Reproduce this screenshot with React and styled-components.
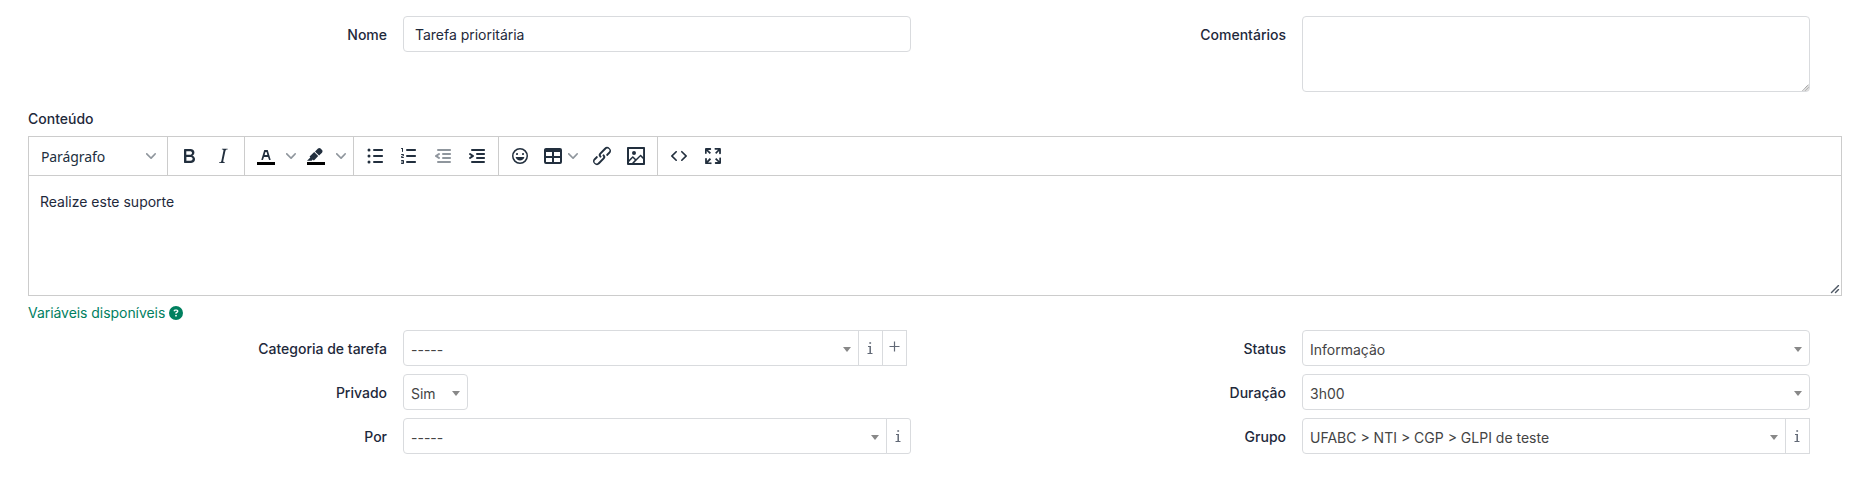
import React from "react";
import styled, { createGlobalStyle, css } from "styled-components";
import { FaCircleQuestion } from "react-icons/fa6";

const GlobalStyle = createGlobalStyle`
  *, *::before, *::after { box-sizing: border-box; }
  body {
    margin: 0;
    background: #fff;
    color: #1e293b;
    font: 400 14px/20px Inter, "Liberation Sans", sans-serif;
  }
`;

const Page = styled.main`
  width: 1870px;
  height: 478px;
  padding: 16px 28px 0;
  overflow: hidden;
  background: #fff;
`;

const FormGrid = styled.section`
  display: grid;
  grid-template-columns: 899px 899px;
  row-gap: 8px;
  margin-left: -16px;
`;

const Field = styled.div`
  display: grid;
  grid-template-columns: 375px 508px;
  column-gap: 16px;
  align-items: start;
`;

const Label = styled.label`
  padding-top: 9px;
  text-align: right;
  font-weight: 500;
`;

const controlBorder = css`
  border: 1px solid #d9dbde;
  border-radius: 4px;
  background: #fff;
`;

const TextInput = styled.input`
  ${controlBorder}
  width: 100%;
  height: 36px;
  padding: 0 11px;
  color: #1e293b;
  font: inherit;
  letter-spacing: -0.02px;
  outline: none;
`;

const TextAreaFrame = styled.div`
  position: relative;
  height: 76px;
`;

const TextArea = styled.textarea`
  ${controlBorder}
  display: block;
  width: 100%;
  height: 76px;
  resize: none;
  outline: none;
`;

const TextAreaGrip = styled.svg`
  position: absolute;
  right: 1px;
  bottom: 1px;
`;

const InputGroup = styled.div`
  display: flex;
  width: ${(p) => p.$width || "508px"};
  height: 36px;
`;

const SelectBox = styled.div`
  ${controlBorder}
  display: flex;
  flex: 1;
  align-items: center;
  justify-content: space-between;
  padding: 2px 7px 0 7px;
  color: #444;
  ${(p) => p.$joined && "border-top-right-radius: 0; border-bottom-right-radius: 0;"}
`;

const SelectValue = styled.span`
  padding-top: 1px;
`;

const Caret = styled.span`
  border: solid transparent;
  border-width: 5px 4px 0;
  border-top-color: #888;
`;

const Addon = styled.span`
  display: flex;
  width: 25px;
  margin-left: -1px;
  align-items: center;
  justify-content: center;
  padding-right: 1px;
  padding-bottom: ${(p) => p.$lift || "0"};
  border: 1px solid #d9dbde;
  border-radius: ${(p) => (p.$rounded ? "0 3px 3px 0" : "0")};
  color: #626976;
`;

const EditorTitle = styled.div`
  height: 44px;
  padding-top: 17px;
  font-weight: 500;
`;

const Editor = styled.section`
  display: flex;
  flex-direction: column;
  width: 1814px;
  height: 160px;
  border: 1px solid #ccc;
`;

const Toolbar = styled.div`
  display: flex;
  height: 39px;
  border-bottom: 1px solid #ccc;
`;

const ToolGroup = styled.div`
  display: flex;
  padding: 0 4px;
  border-right: ${(p) => (p.$last ? "0" : "1px solid #ccc")};
`;

const ToolButton = styled.span`
  display: flex;
  width: ${(p) => p.$width || 34}px;
  align-items: center;
  justify-content: center;
  gap: 3px;
  padding-right: ${(p) => p.$trail || 0}px;
  color: #222f3e;
  opacity: ${(p) => (p.$disabled ? 0.5 : 1)};
`;

const FormatSelect = styled(ToolButton)`
  justify-content: space-between;
  padding: 2px 7px 0 8px;
  font-family: "Noto Sans", sans-serif;
  letter-spacing: -0.1px;
`;

const ChevronSvg = styled.svg`
  flex: none;
  margin-bottom: ${(p) => p.$lift || 0}px;
  fill: #222f3e;
  opacity: 0.5;
`;

const EditorBody = styled.div`
  display: flex;
  flex: 1;
  justify-content: space-between;
  padding: 16px 1px 1px 11px;
`;

const ResizeSvg = styled.svg`
  align-self: flex-end;
  fill: #222f3e;
  opacity: 0.8;
`;

const Variables = styled.a`
  display: flex;
  align-items: center;
  gap: 4px;
  height: 34px;
  color: #00805f;
  letter-spacing: -0.05px;
`;

const ICONS = {
  bold: "M7.8 19c-.3 0-.5 0-.6-.2l-.2-.5V5.7c0-.2 0-.4.2-.5l.6-.2h5c1.5 0 2.7.3 3.5 1 .7.6 1.1 1.4 1.1 2.5a3 3 0 0 1-.6 1.9c-.4.6-1 1-1.6 1.2.4.1.9.3 1.3.6s.8.7 1 1.2c.4.4.5 1 .5 1.6 0 1.3-.4 2.3-1.3 3-.8.7-2.1 1-3.8 1H7.8Zm5-8.3c.6 0 1.2-.1 1.6-.5.4-.3.6-.7.6-1.3 0-1.1-.8-1.7-2.3-1.7H9.3v3.5h3.4Zm.5 6c.7 0 1.3-.1 1.7-.4.4-.4.6-.9.6-1.5s-.2-1-.7-1.4c-.4-.3-1-.4-2-.4H9.4v3.8h4Z",
  italic: "m16.7 4.7-.1.9h-.3c-.6 0-1 0-1.4.3-.3.3-.4.6-.5 1.1l-2.1 9.8v.6c0 .5.4.8 1.4.8h.2l-.2.8H8l.2-.8h.2c1.1 0 1.8-.5 2-1.5l2-9.8.1-.5c0-.6-.4-.8-1.4-.8h-.3l.2-.9h5.8Z",
  textColor: "M8.7 16h-.8a.5.5 0 0 1-.5-.6l2.7-9c.1-.3.3-.4.5-.4h2.8c.2 0 .4.1.5.4l2.7 9a.5.5 0 0 1-.5.6h-.8a.5.5 0 0 1-.4-.4l-.7-2.2c0-.3-.3-.4-.5-.4h-3.4c-.2 0-.4.1-.5.4l-.7 2.2c0 .3-.2.4-.4.4Zm2.6-7.6-.6 2a.5.5 0 0 0 .5.6h1.6a.5.5 0 0 0 .5-.6l-.6-2c0-.3-.3-.4-.5-.4h-.4c-.2 0-.4.1-.5.4Z",
  highlight: "M7.7 16.7H3l3.3-3.3-.7-.8L10.2 8l4 4.1-4 4.2c-.2.2-.6.2-.8 0l-.6-.7-1.1 1.1zm5-7.5L11 7.4l3-2.9a2 2 0 0 1 2.6 0L18 6c.7.7.7 2 0 2.7l-2.9 2.9-1.8-1.8-.5-.6",
  bullets: "M11 5h8c.6 0 1 .4 1 1s-.4 1-1 1h-8a1 1 0 0 1 0-2Zm0 6h8c.6 0 1 .4 1 1s-.4 1-1 1h-8a1 1 0 0 1 0-2Zm0 6h8c.6 0 1 .4 1 1s-.4 1-1 1h-8a1 1 0 0 1 0-2ZM6 4.5a1.5 1.5 0 1 1 0 3 1.5 1.5 0 0 1 0-3Zm0 6a1.5 1.5 0 1 1 0 3 1.5 1.5 0 0 1 0-3Zm0 6a1.5 1.5 0 1 1 0 3 1.5 1.5 0 0 1 0-3Z",
  numbers: "M10 17h8c.6 0 1 .4 1 1s-.4 1-1 1h-8a1 1 0 0 1 0-2Zm0-6h8c.6 0 1 .4 1 1s-.4 1-1 1h-8a1 1 0 0 1 0-2Zm0-6h8c.6 0 1 .4 1 1s-.4 1-1 1h-8a1 1 0 1 1 0-2ZM6 4v3.5c0 .3-.2.5-.5.5a.5.5 0 0 1-.5-.5V5h-.5a.5.5 0 0 1 0-1H6Zm-1 8.8.2.2h1.3c.3 0 .5.2.5.5s-.2.5-.5.5H4.9a1 1 0 0 1-.9-1V13c0-.4.3-.8.6-1l1.2-.4.2-.3a.2.2 0 0 0-.2-.2H4.5a.5.5 0 0 1-.5-.5c0-.3.2-.5.5-.5h1.6c.5 0 .9.4.9 1v.1c0 .4-.3.8-.6 1l-1.2.4-.2.3ZM7 17v2c0 .6-.4 1-1 1H4.5a.5.5 0 0 1 0-1h1.2c.2 0 .3-.1.3-.3 0-.2-.1-.3-.3-.3H4.4a.4.4 0 1 1 0-.8h1.3c.2 0 .3-.1.3-.3 0-.2-.1-.3-.3-.3H4.5a.5.5 0 1 1 0-1H6c.6 0 1 .4 1 1Z",
  outdent: "M7 5h12c.6 0 1 .4 1 1s-.4 1-1 1H7a1 1 0 1 1 0-2Zm5 4h7c.6 0 1 .4 1 1s-.4 1-1 1h-7a1 1 0 0 1 0-2Zm0 4h7c.6 0 1 .4 1 1s-.4 1-1 1h-7a1 1 0 0 1 0-2Zm-5 4h12a1 1 0 0 1 0 2H7a1 1 0 0 1 0-2Zm1.6-3.8a1 1 0 0 1-1.2 1.6l-3-2a1 1 0 0 1 0-1.6l3-2a1 1 0 0 1 1.2 1.6L6.8 12l1.8 1.2Z",
  indent: "M7 5h12c.6 0 1 .4 1 1s-.4 1-1 1H7a1 1 0 1 1 0-2Zm5 4h7c.6 0 1 .4 1 1s-.4 1-1 1h-7a1 1 0 0 1 0-2Zm0 4h7c.6 0 1 .4 1 1s-.4 1-1 1h-7a1 1 0 0 1 0-2Zm-5 4h12a1 1 0 0 1 0 2H7a1 1 0 0 1 0-2Zm-2.6-3.8L6.2 12l-1.8-1.2a1 1 0 0 1 1.2-1.6l3 2a1 1 0 0 1 0 1.6l-3 2a1 1 0 1 1-1.2-1.6Z",
  emoji: "M9 11c.6 0 1-.4 1-1s-.4-1-1-1a1 1 0 0 0-1 1c0 .6.4 1 1 1Zm6 0c.6 0 1-.4 1-1s-.4-1-1-1a1 1 0 0 0-1 1c0 .6.4 1 1 1Zm-3 5.5c2.1 0 4-1.5 4.4-3.5H7.6c.5 2 2.3 3.5 4.4 3.5ZM12 4a8 8 0 1 0 0 16 8 8 0 0 0 0-16Zm0 14.5a6.5 6.5 0 1 1 0-13 6.5 6.5 0 0 1 0 13Z",
  table: "M19 4a2 2 0 0 1 2 2v12a2 2 0 0 1-2 2H5a2 2 0 0 1-2-2V6c0-1.1.9-2 2-2h14ZM5 14v4h6v-4H5Zm14 0h-6v4h6v-4Zm0-6h-6v4h6V8ZM5 12h6V8H5v4Z",
  link: "M6.2 12.3a1 1 0 0 1 1.4 1.4l-2 2a2 2 0 1 0 2.6 2.8l4.8-4.8a1 1 0 0 0 0-1.4 1 1 0 1 1 1.4-1.3 2.9 2.9 0 0 1 0 4L9.6 20a3.9 3.9 0 0 1-5.5-5.5l2-2Zm11.6-.6a1 1 0 0 1-1.4-1.4l2-2a2 2 0 1 0-2.6-2.8L11 10.3a1 1 0 0 0 0 1.4A1 1 0 1 1 9.6 13a2.9 2.9 0 0 1 0-4L14.4 4a3.9 3.9 0 0 1 5.5 5.5l-2 2Z",
  image: "m5 15.7 3.3-3.2c.3-.3.7-.3 1 0L12 15l4.1-4c.3-.4.8-.4 1 0l2 1.9V5H5v10.7ZM5 18V19h3l2.8-2.9-2-2L5 17.9Zm14-3-2.5-2.4-6.4 6.5H19v-4ZM4 3h16c.6 0 1 .4 1 1v16c0 .6-.4 1-1 1H4a1 1 0 0 1-1-1V4c0-.6.4-1 1-1Zm6 8a2 2 0 1 0 0-4 2 2 0 0 0 0 4Z",
  code: "M9.8 15.7c.3.3.3.8 0 1-.3.4-.9.4-1.2 0l-4.4-4.1a.8.8 0 0 1 0-1.2l4.4-4.2c.3-.3.9-.3 1.2 0 .3.3.3.8 0 1.1L6 12l3.8 3.7ZM14.2 15.7c-.3.3-.3.8 0 1 .4.4.9.4 1.2 0l4.4-4.1c.3-.3.3-.9 0-1.2l-4.4-4.2a.8.8 0 0 0-1.2 0c-.3.3-.3.8 0 1.1L18 12l-3.8 3.7Z",
  fullscreen: "m15.3 10-1.2-1.3 2.9-3h-2.3a.9.9 0 1 1 0-1.7H19c.5 0 .9.4.9.9v4.4a.9.9 0 1 1-1.8 0V7l-2.9 3Zm0 4 3 3v-2.3a.9.9 0 1 1 1.7 0V19c0 .5-.4.9-.9.9h-4.4a.9.9 0 1 1 0-1.8H17l-3-2.9 1.3-1.2ZM10 15.4l-2.9 3h2.3a.9.9 0 1 1 0 1.7H5a.9.9 0 0 1-.9-.9v-4.4a.9.9 0 1 1 1.8 0V17l2.9-3 1.2 1.3ZM8.7 10 5.7 7v2.3a.9.9 0 0 1-1.7 0V5c0-.5.4-.9.9-.9h4.4a.9.9 0 0 1 0 1.8H7l3 2.9-1.3 1.2Z",
};

const Icon = ({ name, bar }) => (
  <svg width="24" height="24" viewBox="0 0 24 24" fill="currentColor" fillRule="evenodd">
    {bar && <path fill="#000" d="M3 18h18v3H3z" />}
    <path d={ICONS[name]} />
  </svg>
);

const Chevron = ({ lift }) => (
  <ChevronSvg $lift={lift} width="10" height="10" viewBox="0 0 10 10">
    <path d="M8.7 2.2c.3-.3.8-.3 1 0 .4.4.4.9 0 1.2L5.7 7.8c-.3.3-.9.3-1.2 0L.2 3.4a.8.8 0 0 1 0-1.2c.3-.3.8-.3 1.1 0L5 6l3.7-3.8Z" />
  </ChevronSvg>
);

const InfoIcon = () => (
  <svg width="6" height="12" viewBox="0 0 6 12" fill="none" stroke="currentColor">
    <path strokeWidth="1.5" d="M3.2 4v7M2.3.9h1.8" />
    <path d="M1 4.5h2.5M.5 11.5h5" />
  </svg>
);

const PlusIcon = () => (
  <svg width="11" height="11" viewBox="0 0 11 11" fill="none" stroke="currentColor" strokeWidth="1.2">
    <path d="M5.5.5v10M.5 5.5h10" />
  </svg>
);

const Select = ({ value, width, info, add, rounded }) => (
  <InputGroup $width={width}>
    <SelectBox $joined={info}>
      <SelectValue>{value}</SelectValue>
      <Caret />
    </SelectBox>
    {info && <Addon $rounded={rounded}><InfoIcon /></Addon>}
    {add && <Addon $lift="3px"><PlusIcon /></Addon>}
  </InputGroup>
);

const FormField = ({ label, children }) => (
  <Field>
    <Label>{label}</Label>
    {children}
  </Field>
);

export default function App() {
  return (
    <Page>
      <GlobalStyle />
      <FormGrid>
        <FormField label="Nome"><TextInput defaultValue="Tarefa prioritária" /></FormField>
        <FormField label="Comentários">
          <TextAreaFrame>
            <TextArea />
            <TextAreaGrip width="7" height="7" viewBox="0 0 7 7">
              <path fill="#ddd" d="M7 0v7H0z" />
              <path stroke="#999" strokeDasharray="1.2 .5" d="M.5 6.5l6-6M3.5 6.5l3-3" />
            </TextAreaGrip>
          </TextAreaFrame>
        </FormField>
      </FormGrid>

      <EditorTitle>Conteúdo</EditorTitle>
      <Editor>
        <Toolbar>
          <ToolGroup>
            <FormatSelect $width={130}><span>Parágrafo</span><Chevron lift={2} /></FormatSelect>
          </ToolGroup>
          <ToolGroup>
            <ToolButton><Icon name="bold" /></ToolButton>
            <ToolButton><Icon name="italic" /></ToolButton>
          </ToolGroup>
          <ToolGroup>
            <ToolButton><Icon name="textColor" bar /></ToolButton>
            <ToolButton $width={16}><Chevron /></ToolButton>
            <ToolButton><Icon name="highlight" bar /></ToolButton>
            <ToolButton $width={16}><Chevron /></ToolButton>
          </ToolGroup>
          <ToolGroup>
            <ToolButton><Icon name="bullets" /></ToolButton>
            <ToolButton><Icon name="numbers" /></ToolButton>
            <ToolButton $disabled><Icon name="outdent" /></ToolButton>
            <ToolButton><Icon name="indent" /></ToolButton>
          </ToolGroup>
          <ToolGroup>
            <ToolButton><Icon name="emoji" /></ToolButton>
            <ToolButton $width={48} $trail={3}><Icon name="table" /><Chevron /></ToolButton>
            <ToolButton><Icon name="link" /></ToolButton>
            <ToolButton><Icon name="image" /></ToolButton>
          </ToolGroup>
          <ToolGroup $last>
            <ToolButton><Icon name="code" /></ToolButton>
            <ToolButton><Icon name="fullscreen" /></ToolButton>
          </ToolGroup>
        </Toolbar>
        <EditorBody>
          <span>Realize este suporte</span>
          <ResizeSvg width="10" height="10" viewBox="0 0 10 10">
            <path d="M8.1 1.1A.5.5 0 1 1 9 2l-7 7A.5.5 0 1 1 1 8l7-7ZM8.1 5.1A.5.5 0 1 1 9 6l-3 3A.5.5 0 1 1 5 8l3-3Z" />
          </ResizeSvg>
        </EditorBody>
      </Editor>
      <Variables>
        Variáveis disponíveis <FaCircleQuestion size={14} />
      </Variables>

      <FormGrid>
        <FormField label="Categoria de tarefa"><Select value="-----" width="504px" info add /></FormField>
        <FormField label="Status"><Select value="Informação" /></FormField>
        <FormField label="Privado"><Select value="Sim" width="65px" /></FormField>
        <FormField label="Duração"><Select value="3h00" /></FormField>
        <FormField label="Por"><Select value="-----" info rounded /></FormField>
        <FormField label="Grupo"><Select value="UFABC > NTI > CGP > GLPI de teste" info /></FormField>
      </FormGrid>
    </Page>
  );
}
